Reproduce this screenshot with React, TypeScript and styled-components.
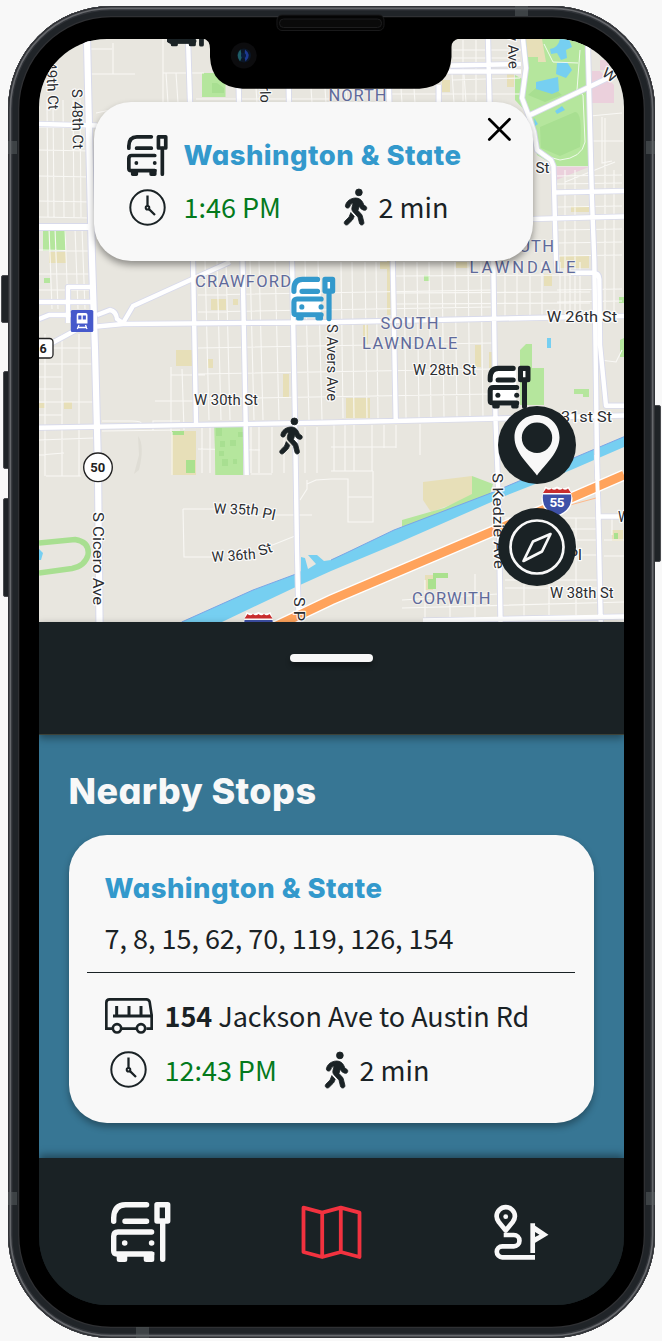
import React from "react";
import styled, { createGlobalStyle } from "styled-components";
import { FaPersonWalking } from "react-icons/fa6";

const ink = "#1a2225";
const paper = "#f8f8f8";
const sky = "#3399cc";
const green = "#047a1c";

const Global = createGlobalStyle`
  * { box-sizing: border-box; }
  body { margin: 0; background: #f8f8f8; }
  svg { display: block; }
`;

const Page = styled.main`
  position: relative;
  width: 662px;
  height: 1341px;
  padding: 6px 7px 0 7.5px;
  overflow: hidden;
  background: #f8f8f8;
`;

const SideButton = styled.i<{ $side: "left" | "right"; $top: number; $height: number; $depth: number }>`
  position: absolute;
  ${(p) => p.$side}: ${(p) => 8 - p.$depth}px;
  top: ${(p) => p.$top}px;
  width: ${(p) => p.$depth + 2}px;
  height: ${(p) => p.$height}px;
  border-radius: 2px;
  background: #1f2327;
  border: 1px solid #4a4c50;
`;

const Chassis = styled.div`
  position: relative;
  height: 1332px;
  padding: 33px 31px 33.5px 31.5px;
  border-radius: 103px;
  background: #000;
  box-shadow:
    inset 0 0 0 1.5px #303236,
    inset 0 0 0 3.2px #66686c,
    inset 0 0 0 4.5px #303338,
    inset 0 0 0 10px #202428,
    inset 0 0 0 11.3px #2f3033;
`;

const Antenna = styled.i<{ $x: number; $y: number; $w: number; $h: number }>`
  position: absolute;
  left: ${(p) => p.$x}px;
  top: ${(p) => p.$y}px;
  width: ${(p) => p.$w}px;
  height: ${(p) => p.$h}px;
  background: rgba(90, 95, 98, 0.5);
`;

const Notch = styled.svg`
  position: absolute;
  left: 191.5px;
  top: 8px;
  z-index: 5;
`;

const Screen = styled.div`
  display: flex;
  flex-direction: column;
  height: 1265.5px;
  border-radius: 68px;
  overflow: hidden;
  background: ${ink};
`;

const MapArea = styled.section`
  position: relative;
  height: 583px;
  flex: none;
`;

const Popup = styled.article`
  position: absolute;
  left: 55px;
  top: 63px;
  width: 439px;
  height: 158.5px;
  padding: 36px 33px 0;
  border-radius: 37px;
  background: ${paper};
  box-shadow: 0 4px 7px rgba(0, 0, 0, 0.38);
`;

const CloseButton = styled.button`
  position: absolute;
  top: 15px;
  right: 21px;
  padding: 0;
  border: 0;
  background: none;
`;

const RoundButton = styled.button<{ $top: number }>`
  position: absolute;
  left: 458.5px;
  top: ${(p) => p.$top}px;
  display: grid;
  place-items: center;
  width: 78px;
  height: 78px;
  padding: 0;
  border: 0;
  border-radius: 50%;
  background: ${ink};
`;

const Row = styled.div<{ $gapTop?: number }>`
  display: flex;
  align-items: center;
  height: 34px;
  margin-top: ${(p) => p.$gapTop ?? 0}px;
`;

const IconSlot = styled.span<{ $width: number; $indent?: number }>`
  flex: none;
  display: block;
  width: ${(p) => p.$width}px;
  padding-left: ${(p) => p.$indent ?? 0}px;
`;

const StopName = styled.h2`
  margin: 0;
  font: 800 27.5px/34px Inter, "Liberation Sans", sans-serif;
  font-feature-settings: "cv11" 1;
  letter-spacing: 0.46px;
  white-space: nowrap;
  color: ${sky};
`;

const Body = styled.span<{ $width?: number; $color?: string }>`
  flex: none;
  width: ${(p) => (p.$width ? `${p.$width}px` : "auto")};
  font: 400 27px/34px "Noto Sans CJK SC", "Noto Sans", sans-serif;
  letter-spacing: -0.02px;
  white-space: nowrap;
  color: ${(p) => p.$color ?? ink};

  b { font-weight: 700; }
`;

const Walker = styled(FaPersonWalking)`
  display: block;
  width: 23px;
  height: 36px;
  color: ${ink};
  stroke-width: 12;
  overflow: visible;
`;

const DragBar = styled.div`
  display: flex;
  justify-content: center;
  position: relative;
  height: 113px;
  flex: none;
  padding-top: 32px;
  background: ${ink};
  border-bottom: 1px solid #3c4238;
  box-shadow: 0 3px 8px rgba(0, 0, 0, 0.4);
`;

const Grip = styled.span`
  width: 83px;
  height: 8px;
  border-radius: 4px;
  background: ${paper};
  box-shadow: 0 4px 5px rgba(0, 0, 0, 0.3);
`;

const Sheet = styled.section`
  height: 422.5px;
  flex: none;
  padding: 33px 30.5px 0 29.5px;
  background: #377694;
`;

const Heading = styled.h1`
  margin: 0 0 21px;
  font: 800 36px/46px Inter, "Liberation Sans", sans-serif;
  font-feature-settings: "cv11" 1;
  letter-spacing: 0.38px;
  white-space: nowrap;
  color: ${paper};
`;

const StopCard = styled.article`
  height: 288px;
  padding: 36px 36px 0;
  border-radius: 38px;
  background: ${paper};
  box-shadow: 0 4px 7px rgba(0, 0, 0, 0.32);
`;

const Divider = styled.hr`
  height: 1.5px;
  margin: 16.5px -17px 0 -18px;
  border: 0;
  background: ${ink};
`;

const NavBar = styled.nav`
  position: relative;
  display: flex;
  flex: 1;
  padding: 44.5px 7.2px 0 6.3px;
  background: ${ink};
  box-shadow: 0 -3px 8px rgba(0, 0, 0, 0.4);
`;

const NavItem = styled.a`
  display: flex;
  flex: 1;
  justify-content: center;
`;

function BusStop({ size, color, glass }: { size: number; color: string; glass?: string }) {
  return (
    <svg width={size} height={size} viewBox="0 0 60 60" overflow="visible" fill="none" stroke={color} strokeWidth={glass ? 7.2 : 5.4} strokeLinecap="round">
      {glass && <path d="M3 20V14Q4 3 14 3H40V56H4V28H3z M46 3h11v16H46z" fill={glass} stroke="none" />}
      <path d="M2.7 19.3V16Q3 2.8 14.5 2.7H35.6M14 19.3H35.6M40.6 30H7Q2.7 30 2.7 34.3V49Q2.7 52 6 52H40.6M51.7 20V57.3" />
      <rect x="46" y="2.7" width="10.7" height="16.3" strokeLinejoin="round" />
      <path d="M5.7 50H16.3V57.5Q16.3 60 13.8 60H8.2Q5.7 60 5.7 57.5zM32.7 50H43.3V57.5Q43.3 60 40.8 60H35.2Q32.7 60 32.7 57.5z" fill={color} stroke="none" />
      <circle cx="13.7" cy="41" r={glass ? 3.6 : 2.8} fill={color} stroke="none" />
      <circle cx="40.6" cy="41" r={glass ? 3.6 : 2.8} fill={color} stroke="none" />
    </svg>
  );
}

function Clock() {
  return (
    <svg width="37" height="37" viewBox="0 0 37 37" fill="none" stroke={ink} strokeWidth="2">
      <circle cx="18.5" cy="18.5" r="17.2" />
      <circle cx="18.5" cy="18.7" r="1.8" />
      <path d="M18.5 6.5V17M20 20.2L26 26" strokeWidth="2.3" />
    </svg>
  );
}

function SideBus() {
  return (
    <svg width="49" height="36" viewBox="133 51 147 108" fill="none" stroke={ink} strokeWidth="8">
      <path d="M154 143H137V65Q137 55 147 55H257Q265 55 267 63L273 103V143H257M184 143H226" />
      <path d="M157 105H276M168 75V105M205 75V105M241 75V105" strokeWidth="9" />
      <circle cx="169" cy="142" r="12.5" />
      <circle cx="241" cy="142" r="12.5" />
    </svg>
  );
}

function MapIcon() {
  return (
    <svg width="61" height="60" viewBox="300.5 1202 61 60" fill="none" stroke="#f2323f" strokeWidth="3.8" strokeLinejoin="round">
      <path d="M303 1207.7L321.7 1212.7L340.3 1207.7L359 1212.7V1257L340.3 1252L321.7 1257L303 1252zM321.7 1212.7V1257M340.3 1207.7V1252" />
    </svg>
  );
}

function RouteIcon() {
  return (
    <svg width="55" height="60" viewBox="494 1202 55 60" fill="none" stroke={paper} strokeWidth="4.7">
      <path d="M505.7 1230.5L498.8 1222Q496.6 1219 496.6 1216.3A9.1 9.1 0 0 1 514.9 1216.3Q514.9 1219 512.7 1222z" strokeLinejoin="round" />
      <path d="M503.7 1235H513.8A5.6 5.6 0 0 1 513.8 1246.3H502.3A5.5 5.5 0 0 0 502.3 1257.3H535" />
      <path d="M532.7 1223.3V1253" />
      <path d="M534.8 1225.5L548.5 1234.8L534.8 1243zM535 1232V1237L539.5 1234.7z" fill={paper} fillRule="evenodd" stroke="none" />
      <circle cx="505.7" cy="1216.7" r="2.4" fill={paper} stroke="none" />
    </svg>
  );
}

const majorRoads = [
  "M87 39L89 130L92 260L95 350L98 470L99.5 622",
  "M39 227H92",
];
const roads = [
  "M188 39L190 102L193 260L196 423",
  "M238.7 88L242.5 260L246.7 475",
  "M288.7 88L292 260L295 420L297 550L298.7 622",
  "M389 88L392.7 260L395.7 420",
  "M438.7 85V103",
  "M488 39L493.3 260L495.5 420L498.7 500L500.5 622",
  "M587.7 39L592 200L594.3 260L595.5 345L597 460L598.5 520L600.7 622",
  "M523 39L526 68L522 98L528 114L534 132L537 150L551 160L553.5 166L556 260L557 272",
  "M571 272.7H593Q599 273 599.3 279L600 345L606 405.7H624",
  "M39 124L97 125.5",
  "M451 65.5L521 64M448 71.5H521",
  "M528 116L587 88L610 77",
  "M555 192.5L624 191M533 219L624 216.5",
  "M97 326.5L123 324L331 322.2L624 316",
  "M39 427.7L331 422.5L624 415.5",
  "M39 319L49 315H76M68 315V287H94M39 302H94M68 315V323",
  "M39 350L76 330",
  "M97 315L110 310Q116 311 117 319L123 323L133 306L230 262",
  "M423 620.5L624 616.5M599 516.5H624",
];

const thin: string[] = [
  ...[47, 53, 63, 73, 80].map((x) => `M${x} 100L${x + 1} 217M${x + 2} 228L${x + 5} 309`),
  ...[45, 62, 79].map((x) => `M${x} 334V476`),
  ...[127, 150, 176, 201, 217, 250].map((y) => `M39 ${y}L92 ${y + 1}`),
  ...[274, 290, 348, 364, 377, 389, 402, 415].map((y) => `M39 ${y}H${y % 2 ? 62 : 94}`),
  "M39 440L94 438M39 455L64 453M46 476H81",
  ...[205, 217, 226, 250, 259, 275, 305, 318].map((x) => `M${x} 260L${x + 4} 420`),
  ...[341, 352, 365, 376, 404, 417, 429, 442, 455, 468, 481].map((x) => `M${x} 262L${x + 2} 418`),
  ...[505, 517, 530, 542, 560, 570, 580].map((x) => `M${x} 262V316`),
  ...[295, 312, 348, 374, 399].map((y) => `M198 ${y}L493 ${y - 5}`),
  ...[276, 293, 304].map((y) => `M396 ${y}L590 ${y - 1}`),
  ...[166, 176, 255, 310, 324, 345, 400, 413, 452, 464].map((x) => `M${x} 73L${x + 2} 103`),
  ...[463, 476].map((x) => `M${x} 40V101`),
  "M113 43V74M90 74H135M90 49H112M163 39V103M163 73H204M196 99H330M96 113L120 108",
  "M453 50H521M453 58H520M453 80L520 78M391 94H520",
  ...[565, 575, 605, 614].map((x) => `M${x} 170V315`),
  ...[176, 184, 207, 230, 243, 256, 290, 302].map((y) => `M557 ${y}L622 ${y - 1}`),
  "M602 117V163L612 161M590 116L622 113M605 118V188M565 182L615 162M590 141H623",
  "M171 367V432M182 369L184 430M171 375H205M155 401H205M102 421H132Q142 421 141 424M102 431L180 430M153 430V421H180",
  ...[202, 210, 251, 259, 272, 284, 305, 317].map((x) => `M${x} 427V473`),
  "M198 449L260 450M251 474H272M172 475V432",
  "M183 509H225M183 509L184 557H215M240 515H312M270 546L295 536M307 480V489L300 500M307 484L316 480L331 479",
  ...[334, 345, 354, 372, 384, 396].map((x) => `M${x} 425V${x > 380 ? 448 : 471}`),
  "M331 447H396M331 471H373M331 479H348V522H373V471M348 497H372M420 424V455",
  "M402 608L624 602M402 600L498 594M425 580V620M450 595V620M475 574V620M524 580V618M549 580V620M576 518V620",
  ...[518, 529, 540, 555, 580, 588].map((y) => `M505 ${y}H600`),
  "M600 360L616 362L622 350M612 515V535M604 540H624M604 556H624",
];

const water = "#76cff1";
const tan = "#e7dfb8";
const grass = "#b5e69d";
const turf = "#a8df91";

const Shield = () => (
  <g>
    <path d="M545 486.500Q551 490 557 486.500Q563 490 569 486.500L572.500 498Q573 511 557 517Q541 511 541.500 498z" fill="#fff" />
    <path d="M546 488.500Q549 491 551.500 488.500Q554 491 557 488.500Q560 491 562.500 488.500Q565 491 568 488.500L571 493H543z" fill="#c92d2d" />
    <path d="M543 494.500H571Q573 510 557 515.500Q541 510 543 494.500z" fill="#3e51a8" />
    <text x="549.5" y="506.5" textLength="15" fontFamily="Roboto" fontSize="13.5" fontWeight="700" fill="#fff">55</text>
  </g>
);

type Label = [string, number, number, number, number?];
const streets: Label[] = [
  ["W 30th St", 194, 404.5, 64],
  ["W 28th St", 413, 374.5, 63],
  ["W 26th St", 546.7, 321.7, 70.5],
  ["31st St", 561, 421.5, 51],
  ["W 38th St", 550, 598, 63.5],
  ["St", 535.5, 172.5, 14],
  ["W 35t", 213.5, 513.5, 37, 2],
  ["h", 250, 514, 8, 10],
  ["Pl", 261.5, 517.5, 13, 12],
  ["W 36th", 212, 562, 44, -4],
  ["St", 260, 556, 14, -18],
  ["Pl", 568, 560, 14],
  ["W", 618, 522, 12],
  ["W", 601, 75, 14, 35],
  ["49th Ct", 46, 62, 48, 87],
  ["S 48th Ct", 72, 89, 60, 89],
  ["S Cicero Ave", 93, 512, 93, 90],
  ["S Avers Ave", 327, 324, 77, 90],
  ["S Kedzie Ave", 492.5, 473, 96, 89],
  ["S P", 294, 597, 24, 90],
  ["y Ave", 508, 34, 35, 89],
  ["rlo", 260, 86, 17, 89],
];
const districts: Label[] = [
  ["NORTH", 328.5, 101, 58],
  ["CRAWFORD", 195, 286.5, 96],
  ["SOUTH", 380.5, 329, 58],
  ["LAWNDALE", 362, 349, 95.5],
  ["SOUTH", 495.5, 251.5, 58.5],
  ["LAWNDALE", 469.5, 273, 106],
  ["CORWITH", 412, 604, 78.5],
];

function StreetMap() {
  return (
    <svg width="585" height="583" viewBox="39 39 585 583" fill="none">
      <path d="M39 39H624V622H39z" fill="#e8e6df" />
      <path d="M525 39H587L589 166H555L537 155L528 114L515 100V75L524 80z" fill={grass} />
      <path d="M540 127L575 112Q583 112 580 147L560 156L541 148z M545 80L562 95L545 102L528 95z" fill={turf} />
      <path d="M526 39H542L546 62H538V57H528z M507 74H514V87H507z M442 80H450V92H442z" fill={tan} />
      <path d="M550 49Q558 48 560 39H569L572 47L566 50L567 58L561 60L557 53L551 54z M557 63L567 62L572 70L566 78L556 74z M536 82L558 77L559 91L552 94L536 89z M555 111L562 106L565 110L557 114z M534 118L538 124L535 126z" fill={water} />
      <path d="M544 44L553 62L578 63M580 50L577 90L583 95L585 142Q582 158 560 160L549 157" stroke="#fff" strokeOpacity=".8" />
      <path d="M592 71H600L614 85V103H592zM600 60H609V70H600zM556 167H589L556 180z" fill="#ebd0dc" />
      <path d="M202 73H225.5V97H202zM43 231H66V251H43zM44 278H50V283H44zM214.5 427H243V475H215.5zM424 275H430V281H424zM574 389H589V397H583V394H574zM619 297H624V303H619zM620 340L624 338V357H620zM520 350L526 344H532V368H544V405H520z" fill={grass} />
      <path d="M49 252H66V263H49zM176 350H192V366H176zM208 359H213V368H208zM283 374H289V398H283zM211 299H226V310H211zM233 299H238V305H233zM171.5 431H196V475H171.5zM39 403H45V408H39zM64 402H72V409H64zM346 398H370V418H346zM363 325H368V345H363zM475 345H481V367H475zM489 352H492V368H489zM387 260H391V315H387zM456 262H469V268H456zM544 274H552V286H544zM560 256H589V268H560zM571 206H589V212H571zM380 262H389V269H380zM612 530H623V541H612zM425 575H433V590H425z" fill={tan} />
      <path d="M172 431H184V435H172zM186 460H195V473H186zM433 573H448V578H436V589H428V579H433zM614 533H618V539H614z" fill="#aae18e" />
      <path d="M138 436Q145 445 139 470L134 474L139 455z" fill="#dfddd5" />
      <path d="M39 543L75 539.5Q90 542 88 555Q85 566 72 568.5L39 573" stroke={turf} strokeWidth="5.5" />
      <path d="M39 549L43 553L41 560H39zM547 338H551V348H547z" fill={water} />
      <path d="M423 482L472 476V497L431 512L423 500z" fill={tan} />
      <path d="M472 476L493 484L490 494L402 529V520L444 508L472 494z" fill={grass} />

      <path d={thin.join("")} stroke="#f9f8f5" strokeWidth="1.1" />
      <path d="M214.5 427H243V475H215.5z" fill={grass} />
      <path d="M212 83H217L224 88V93H212zM216 428H222V436H216zM238 432H243V437H238zM220 441H225V447H220zM230 440H236V446H230zM222 459H228V466H222zM233 459H237V464H233zM219 451H224V456H219z" fill={turf} />

      <path d="M181.7 622L253 590L296 574L301 571V557L305 558L308 569L316 564L308 555H317L324 561L331 560L346 553L394 530L491 493L518 481.5L624 436.7V447L571 470L505 496L398 543L331 571L300 585L222 622z" fill={water} />
      <path d="M181.7 622L253 590L296 574M331 560L346 553L394 530L491 493L518 481.5L624 436.7" stroke="#7aa4e6" strokeWidth="1" />

      <g strokeLinejoin="round">
        <path d={roads.join("")} stroke="#d8daeb" strokeWidth="6.2" />
        <path d={majorRoads.join("")} stroke="#d8daeb" strokeWidth="8.2" />
        <path d={roads.join("")} stroke="#fff" strokeWidth="4.4" />
        <path d={majorRoads.join("")} stroke="#fff" strokeWidth="6.2" />
      </g>
      <path d="M331 90V103" stroke="#6066a0" strokeWidth="1" />
      <path d="M570 505L596 498M571 494L594 484L597 478" stroke="#ffb98a" />
      <path d="M268 630L331 600L491 532L571 498L624 475" stroke="#fff" strokeWidth="11.5" />
      <path d="M268 630L331 600L491 532L571 498L624 475" stroke="#ffa35c" strokeWidth="8.8" />
      <path d="M596.5 455L598.5 520" stroke="#fff" strokeWidth="4" />

      <g fontFamily="Roboto, sans-serif" fontSize="14.5" fill="#2b2d31" stroke="#fff" strokeOpacity=".85" strokeWidth="2.4" paintOrder="stroke" strokeLinejoin="round">
        {streets.map(([t, x, y, len, rot], i) => (
          <text key={i} transform={`translate(${x} ${y}) rotate(${rot ?? 0})`} textLength={len} lengthAdjust="spacingAndGlyphs">{t}</text>
        ))}
      </g>
      <g fontFamily="Roboto, sans-serif" fontSize="16.5" fill="#5f6a9b" stroke="#f3f2ee" strokeOpacity=".85" strokeWidth="2.2" paintOrder="stroke" strokeLinejoin="round">
        {districts.map(([t, x, y, len], i) => (
          <text key={i} x={x} y={y} textLength={len}>{t}</text>
        ))}
      </g>

      <Shield />
      <g transform="translate(-298.5 125.5)"><Shield /></g>

      <rect x="70.8" y="310" width="22.5" height="22" rx="1.5" fill="#4659cb" />
      <path d="M78.500 313H85.500Q87.500 313 87.500 315V323.500H76.700V315Q76.700 313 78.500 313z" fill="#fff" />
      <path d="M78.300 315.500H81.400V319.500H78.300zM82.800 315.500H85.900V319.500H82.800z" fill="#4659cb" />
      <path d="M79 325L77.300 329M85.500 325L87 329M77.500 327.500H87" stroke="#fff" strokeWidth="1.300" />

      <rect x="30" y="338.500" width="23" height="19.500" rx="3.500" fill="#fff" stroke="#222" strokeWidth="1.300" />
      <text x="39.500" y="352.800" fontFamily="Roboto" fontWeight="700" fontSize="12.500" fill="#222">6</text>
      <circle cx="98" cy="467.300" r="14.300" fill="#fff" stroke="#222" strokeWidth="1.400" />
      <text x="90.300" y="472" textLength="15" fontFamily="Roboto" fontWeight="700" fontSize="13" fill="#222">50</text>

      <svg x="167" y="6.500" width="40" height="40"><BusStop size={40} color={ink} glass={ink} /></svg>
      <svg x="292" y="277.500" width="44" height="44" overflow="visible"><BusStop size={43} color={sky} glass="#fff" /></svg>
      <svg x="488.300" y="366.500" width="43" height="43" overflow="visible"><BusStop size={42} color={ink} glass="#fff" /></svg>
      <svg x="279.500" y="418" width="23" height="36" overflow="visible"><Walker /></svg>
    </svg>
  );
}

export default function App() {
  return (
    <Page>
      <Global />
      <SideButton $side="left" $top={275} $height={48} $depth={7} />
      <SideButton $side="left" $top={371} $height={98} $depth={5} />
      <SideButton $side="left" $top={498} $height={99} $depth={5} />
      <SideButton $side="right" $top={405} $height={157} $depth={7} />
      <Chassis>
        <Antenna $x={0.5} $y={135} $w={9} $h={13} />
        <Antenna $x={638} $y={135} $w={9} $h={13} />
        <Antenna $x={507} $y={0} $w={13} $h={10} />
        <Antenna $x={0.5} $y={1186} $w={9} $h={13} />
        <Antenna $x={638} $y={1186} $w={9} $h={13} />
        <Antenna $x={128} $y={1321} $w={13} $h={11} />
        <Notch width="260" height="76" viewBox="199.500 14 260 76">
          <path d="M203 38.500Q210.500 39.500 210.500 49V57Q212 87 243 88.700H420Q450 87 452 57V47Q452 40 460 38.500z" fill="#000" />
          <rect x="277.500" y="15" width="107" height="15.500" rx="5" fill="#050505" stroke="#19191a" />
          <rect x="280" y="19" width="102" height="8.500" rx="4" fill="#0a0a0a" stroke="#1d1d1e" />
          <circle cx="244.300" cy="55.500" r="13" fill="#0c0c0e" />
          <circle cx="244.500" cy="55.500" r="7" fill="#0b1626" />
          <path d="M241 49.500Q235.500 55 240.500 61.500L242.500 57z" fill="#1f5e66" />
          <path d="M245.500 49.500Q253 55 246 61.500L245 57z" fill="#1d3a92" />
          <circle cx="244" cy="55.500" r="2.500" fill="#0a1c3c" />
        </Notch>
        <Screen>
          <MapArea>
            <StreetMap />
            <Popup>
              <CloseButton aria-label="Close">
                <svg width="25" height="25" viewBox="0 0 25 25" stroke="#000" strokeWidth="2.700" strokeLinecap="round">
                  <path d="M2.300 2.300L22.500 22.500M22.500 2.300L2.300 22.500" />
                </svg>
              </CloseButton>
              <Row>
                <IconSlot $width={56.5}><BusStop size={41} color={ink} /></IconSlot>
                <StopName>Washington &amp; State</StopName>
              </Row>
              <Row $gapTop={18}>
                <IconSlot $width={56.5} $indent={2}><Clock /></IconSlot>
                <Body $color={green} $width={160}>1:46 PM</Body>
                <IconSlot $width={35}><Walker /></IconSlot>
                <Body>2 min</Body>
              </Row>
            </Popup>
            <RoundButton $top={367} aria-label="My location">
              <svg width="46" height="61" viewBox="0 0 46 61">
                <path d="M23 0C10 0 .5 9.500 .5 22.500C.5 38 15 49 23 60.500C31 49 45.500 38 45.500 22.500C45.500 9.500 36 0 23 0z" fill={paper} />
                <circle cx="23" cy="22.700" r="15.200" fill={ink} />
              </svg>
            </RoundButton>
            <RoundButton $top={469} aria-label="Compass">
              <svg width="56" height="56" viewBox="0 0 56 56" fill="none" stroke={paper} strokeWidth="2.700">
                <circle cx="28" cy="28" r="26.500" />
                <path d="M41.500 15L24 22.500L14.500 42L33 32.500z" strokeLinejoin="round" />
              </svg>
            </RoundButton>
          </MapArea>
          <DragBar><Grip /></DragBar>
          <Sheet>
            <Heading>Nearby Stops</Heading>
            <StopCard>
              <StopName>Washington &amp; State</StopName>
              <Row $gapTop={16}><Body>7, 8, 15, 62, 70, 119, 126, 154</Body></Row>
              <Divider />
              <Row $gapTop={25.5}>
                <IconSlot $width={60}><SideBus /></IconSlot>
                <Body><b>154</b> Jackson Ave to Austin Rd</Body>
              </Row>
              <Row $gapTop={20}>
                <IconSlot $width={60} $indent={5}><Clock /></IconSlot>
                <Body $color={green} $width={160}>12:43 PM</Body>
                <IconSlot $width={35}><Walker /></IconSlot>
                <Body>2 min</Body>
              </Row>
            </StopCard>
          </Sheet>
          <NavBar>
            <NavItem><BusStop size={60} color={paper} /></NavItem>
            <NavItem><MapIcon /></NavItem>
            <NavItem><RouteIcon /></NavItem>
          </NavBar>
        </Screen>
      </Chassis>
    </Page>
  );
}
